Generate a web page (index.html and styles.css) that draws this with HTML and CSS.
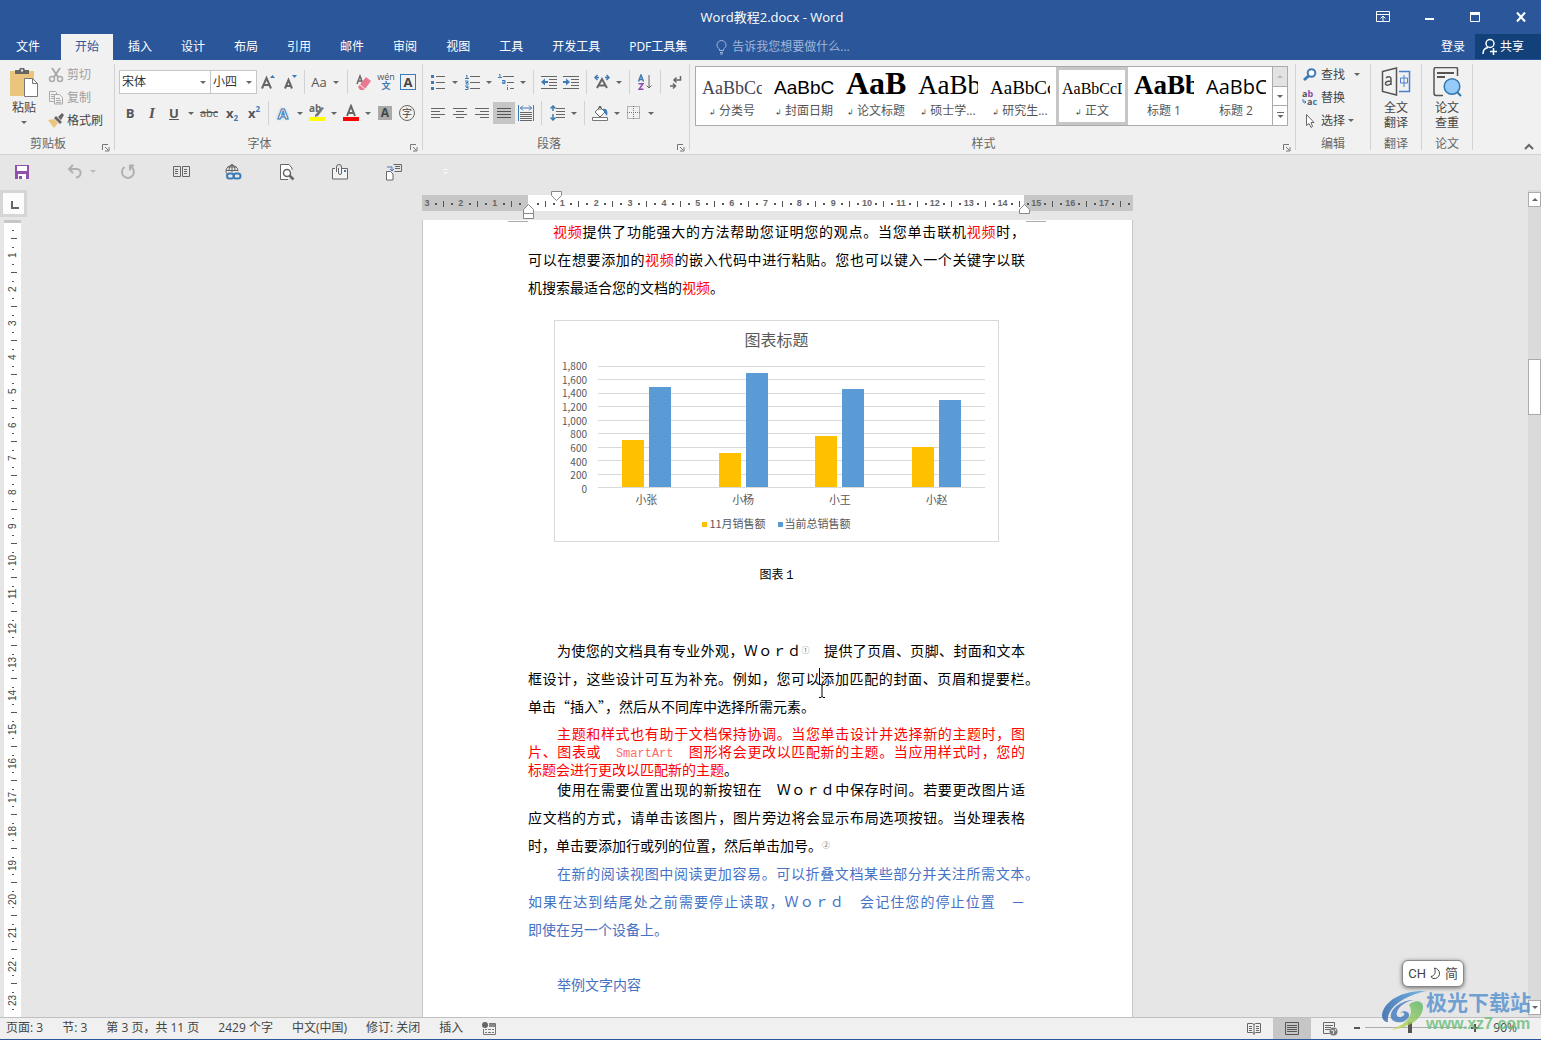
FILE: index.html
```html
<!DOCTYPE html>
<html lang="zh-CN">
<head>
<meta charset="utf-8">
<title>Word教程2.docx - Word</title>
<link rel="stylesheet" href="styles.css">
</head>
<body>
<header class="top">
  <div class="titlebar">
    <span class="doc-title">Word教程2.docx - Word</span>
    <div class="win-buttons">
      <button aria-label="功能区显示选项"><svg width="14" height="12"><path d="M.5 .5h13v10h-13zM.5 3.500h13M7 10V5.500M4.500 7.500L7 5l2.500 2.500" fill="none" stroke="#fff"/></svg></button>
      <button aria-label="最小化"><svg width="12" height="12"><path d="M2 7h9v2H2z" fill="#fff"/></svg></button>
      <button aria-label="最大化"><svg width="12" height="12"><path d="M1.500 1.500h9v9h-9z" fill="none" stroke="#fff"/><path d="M1 1h10v3H1z" fill="#fff"/></svg></button>
      <button aria-label="关闭"><svg width="12" height="12"><path d="M2 1.500l8 9M10 1.500l-8 9" stroke="#fff" stroke-width="2"/></svg></button>
    </div>
  </div>
  <nav class="tabs">
    <button class="tab file">文件</button>
    <button class="tab active">开始</button>
    <button class="tab">插入</button>
    <button class="tab">设计</button>
    <button class="tab">布局</button>
    <button class="tab">引用</button>
    <button class="tab">邮件</button>
    <button class="tab">审阅</button>
    <button class="tab">视图</button>
    <button class="tab">工具</button>
    <button class="tab">开发工具</button>
    <button class="tab">PDF工具集</button>
    <label class="tell">
      <svg width="11" height="15"><path d="M3.500 10.500v-1.500C2 8 1 6.800 1 5a4.500 4.500 0 019 0c0 1.800-1 3-2.500 4v1.500zM4 12.500h3M4 14h3" fill="none" stroke="#9fb6d8"/></svg>
      <input type="text" aria-label="告诉我" placeholder="告诉我您想要做什么...">
    </label>
    <button class="login">登录</button>
    <button class="share"><svg width="15" height="17"><circle cx="8" cy="5.500" r="4" fill="none" stroke="#fff" stroke-width="1.500"/><path d="M1 16c0-4 2-6 5-6.500M11.500 10v7M8 13.500h7" fill="none" stroke="#fff" stroke-width="1.500"/></svg>共享</button>
  </nav>
</header>

<section class="ribbon">
  <div class="group clipboard">
    <div class="body">
      <button class="big">
        <svg width="30" height="31"><path d="M1 4h24v25H1z" fill="#ecc57c"/><path d="M6 3h4l1-2h4l1 2h4v4H6z" fill="#666"/><path d="M12 2.500h2v2h-2z" fill="#f1f1f1"/><path d="M15.500 11.500h8l5 5v13h-13z" fill="#fff" stroke="#777"/><path d="M23.500 11.500v5h5" fill="none" stroke="#777"/></svg>
        <span>粘贴</span><i class="caret"></i>
      </button>
      <div class="stack">
        <button class="off"><svg width="16" height="16"><path d="M4 1l6 9M12 1L6 10" stroke="#aaa" stroke-width="2"/><circle cx="4" cy="12" r="2.500" fill="none" stroke="#aaa" stroke-width="1.500"/><circle cx="12" cy="12" r="2.500" fill="none" stroke="#aaa" stroke-width="1.500"/></svg>剪切</button>
        <button class="off"><svg width="16" height="16"><path d="M1.500 1.500h6l1 1v9h-7zM3 4.500h3M3 6.500h3M3 8.500h3" fill="none" stroke="#aaa"/><path d="M6.500 4.500h5l3 3v6.500h-8z" fill="#f1f1f1" stroke="#aaa"/><path d="M8 8.500h4M8 10.500h5M8 12.500h5" stroke="#aaa"/></svg>复制</button>
        <button><svg width="16" height="16"><path d="M0 7l6-1 4 4-4 5z" fill="#ecc57c"/><path d="M6 5l2-2 6 6-2 2zM10 4l4-4 2 2-3 5z" fill="#666"/></svg>格式刷</button>
      </div>
    </div>
    <div class="label">剪贴板<svg class="launch" width="8" height="8"><path d="M.5 6V.5H6M3 3l3 3M7 3v4H3" fill="none" stroke="#777"/></svg></div>
  </div>

  <div class="group font">
    <div class="body rows">
      <div class="row">
        <label class="combo wide"><select aria-label="字体"><option>宋体</option></select><i class="caret"></i></label>
        <label class="combo"><select aria-label="字号"><option>小四</option></select><i class="caret"></i></label>
        <button class="ic" aria-label="增大字号"><svg width="16" height="16"><path d="M2 14.500L6.500 4 11 14.500M3.500 11h6" fill="none" stroke="#666" stroke-width="2"/><path d="M10 4l2.500-3L15 4z" fill="#3e7ab5"/></svg></button>
        <button class="ic" aria-label="减小字号"><svg width="16" height="16"><path d="M3 14.500L6.500 6 10 14.500M4 12h5" fill="none" stroke="#666" stroke-width="2"/><path d="M10 1l2.500 3L15 1z" fill="#3e7ab5"/></svg></button>
        <i class="sep"></i>
        <button class="ic txt">Aa</button><i class="caret arr"></i>
        <i class="sep big-sep"></i>
        <button class="ic" aria-label="清除格式"><svg width="16" height="16"><path d="M1 10L4 2l3 8M2 7h4" fill="none" stroke="#666" stroke-width="1.500"/><path d="M4 10.500L10 3l5 4-6 8z" fill="#e8798f"/><path d="M2 13l2-2.500 5 4-1 1.500H4z" fill="#e8798f"/><path d="M3.500 10.500l5.500 4.500" stroke="#f1f1f1"/></svg></button>
        <button class="ic pinyin" aria-label="拼音指南"><span>wén</span><b>文</b></button>
        <button class="ic" aria-label="字符边框"><span class="boxed">A</span></button>
      </div>
      <div class="row">
        <button class="ic txt"><b>B</b></button>
        <button class="ic txt serif"><b><em>I</em></b></button>
        <button class="ic txt"><b><u>U</u></b></button><i class="caret arr"></i>
        <button class="ic txt small strike"><s>abc</s></button>
        <button class="ic txt"><b>x<small class="lo">2</small></b></button>
        <button class="ic txt"><b>x<small class="hi">2</small></b></button>
        <i class="sep"></i>
        <button class="ic" aria-label="文本效果"><span class="glow">A</span></button><i class="caret arr"></i>
        <button class="ic" aria-label="突出显示"><svg width="16" height="18"><text x="0" y="8" class="svg-ab">ab</text><path d="M6 11l7-8 2 1-6 8-3 1z" fill="#777"/><path d="M0 13h16v4H0z" fill="#ff0"/></svg></button><i class="caret arr"></i>
        <button class="ic" aria-label="字体颜色"><svg width="16" height="18"><path d="M4 12L8 2l4 10M5.500 9h5" fill="none" stroke="#666" stroke-width="2"/><path d="M0 13h16v4H0z" fill="#f00"/></svg></button><i class="caret arr"></i>
        <button class="ic"><span class="shaded">A</span></button>
        <button class="ic"><span class="ring">字</span></button>
      </div>
    </div>
    <div class="label">字体<svg class="launch" width="8" height="8"><path d="M.5 6V.5H6M3 3l3 3M7 3v4H3" fill="none" stroke="#777"/></svg></div>
  </div>

  <div class="group para">
    <div class="body rows">
      <div class="row">
        <button class="ic" aria-label="项目符号"><svg width="14" height="16"><path d="M0 1h3v3H0zM0 7h3v3H0zM0 13h3v3H0z" fill="#3e7ab5"/><path d="M5 2.500h9M5 8.500h9M5 14.500h9" stroke="#666"/></svg></button><i class="caret arr"></i>
        <button class="ic" aria-label="编号"><svg width="15" height="16"><path d="M1 1.500h1v3M0 4.500h4M0 7h3v1.500H1v1.500h3M0 12h3v3.500H0M1 13.500h2" fill="none" stroke="#3e7ab5"/><path d="M5 2.500h10M5 8.500h10M5 14.500h10" stroke="#666"/></svg></button><i class="caret arr"></i>
        <button class="ic" aria-label="多级列表"><svg width="17" height="16"><path d="M1 .5h1v3M0 3.500h4M4 6.500h3v3H4.500v-1.500H7M9.500 11v1M9.500 13v3" fill="none" stroke="#3e7ab5"/><path d="M5 2.500h11M9 8.500h7M12 14.500h4" stroke="#666"/></svg></button><i class="caret arr"></i>
        <i class="sep"></i>
        <button class="ic" aria-label="减少缩进"><svg width="16" height="14"><path d="M0 1.500h16M8 4.500h8M8 7.500h8M8 10.500h8M0 13.500h16" stroke="#666"/><path d="M0 7l4-3.500V6h3v2H4v2.500z" fill="#3e7ab5"/></svg></button>
        <button class="ic" aria-label="增加缩进"><svg width="16" height="14"><path d="M0 1.500h16M8 4.500h8M8 7.500h8M8 10.500h8M0 13.500h16" stroke="#666"/><path d="M7 7L3 3.500V6H0v2h3v2.500z" fill="#3e7ab5"/></svg></button>
        <i class="sep"></i>
        <button class="ic" aria-label="中文版式"><svg width="18" height="16"><path d="M4 14l5-9 5 9M6 11.500h6" fill="none" stroke="#666" stroke-width="2"/><path d="M4.500 1L2 3.500 4.500 6M2 3.500h4M13.500 1L16 3.500 13.500 6M16 3.500h-4" fill="none" stroke="#3e7ab5" stroke-width="1.500"/></svg></button><i class="caret arr"></i>
        <i class="sep"></i>
        <button class="ic" aria-label="排序"><svg width="14" height="17"><path d="M.5 7.500L3 1l2.500 6.500M1.500 5.500h3" fill="none" stroke="#3e7ab5" stroke-width="1.500"/><path d="M.5 9.800h4.500l-4 5.500h4.500" fill="none" stroke="#8e4db0" stroke-width="1.500"/><path d="M11 1v13M8.500 11.500L11 14l2.500-2.500" fill="none" stroke="#666"/></svg></button>
        <i class="sep"></i>
        <button class="ic" aria-label="显示编辑标记"><svg width="12" height="14"><path d="M10.500 1v4H4M6.500 2.500L4 5l2.500 2.500M0 11h5M3 8.500L5.500 11 3 13.500" fill="none" stroke="#666" stroke-width="1.500"/></svg></button>
      </div>
      <div class="row">
        <button class="ic" aria-label="左对齐"><svg width="14" height="12"><path d="M0 1.500h14M0 4.500h9M0 7.500h14M0 10.500h9" stroke="#666"/></svg></button>
        <button class="ic" aria-label="居中"><svg width="14" height="12"><path d="M0 1.500h14M3 4.500h8M0 7.500h14M3 10.500h8" stroke="#666"/></svg></button>
        <button class="ic" aria-label="右对齐"><svg width="14" height="12"><path d="M0 1.500h14M5 4.500h9M0 7.500h14M5 10.500h9" stroke="#666"/></svg></button>
        <button class="ic on" aria-label="两端对齐"><svg width="14" height="12"><path d="M0 1.500h14M0 4.500h14M0 7.500h14M0 10.500h14" stroke="#555"/></svg></button>
        <button class="ic" aria-label="分散对齐"><svg width="16" height="16"><path d="M.5 0v16M15.500 0v16M2 3h12M5 .5L2.500 3 5 5.500M11 .5L13.500 3 11 5.500" fill="none" stroke="#3e7ab5"/><path d="M2 7.500h12M2 9.500h12M2 11.500h12M2 13.500h12M2 15.500h12" stroke="#666"/></svg></button>
        <i class="sep big-sep"></i>
        <button class="ic" aria-label="行距"><svg width="15" height="16"><path d="M6 3.500h9M6 6.500h9M6 9.500h9M6 12.500h9" stroke="#666"/><path d="M3 1v5M.5 3.500L3 1l2.500 2.500M3 9v6M.5 12.500L3 15l2.500-2.500" fill="none" stroke="#3e7ab5" stroke-width="1.500"/></svg></button><i class="caret arr"></i>
        <i class="sep"></i>
        <button class="ic" aria-label="底纹"><svg width="17" height="16"><path d="M3 7l5-5 5 5-5 5z" fill="#fff" stroke="#666"/><path d="M7 5V1.500h2V5" fill="none" stroke="#666"/><path d="M11 4c4-1 5 3 4 7l-3-4z" fill="#3e7ab5"/><path d="M.5 12.500h15v3H.5z" fill="#fff" stroke="#777"/></svg></button><i class="caret arr"></i>
        <button class="ic" aria-label="边框"><svg width="14" height="14"><path d="M.5 .5h12v12H.5zM6.500 0v13M0 6.500h13" fill="none" stroke="#777" stroke-dasharray="1 1"/></svg></button><i class="caret arr"></i>
      </div>
    </div>
    <div class="label">段落<svg class="launch" width="8" height="8"><path d="M.5 6V.5H6M3 3l3 3M7 3v4H3" fill="none" stroke="#777"/></svg></div>
  </div>

  <div class="group styles">
    <div class="gallery">
      <button class="style"><span class="pv s1">AaBbCc</span><span class="nm"><i>↲</i> 分类号</span></button>
      <button class="style"><span class="pv s2">AaBbCc</span><span class="nm"><i>↲</i> 封面日期</span></button>
      <button class="style"><span class="pv s3">AaB</span><span class="nm"><i>↲</i> 论文标题</span></button>
      <button class="style"><span class="pv s4">AaBb</span><span class="nm"><i>↲</i> 硕士学...</span></button>
      <button class="style"><span class="pv s5">AaBbCc</span><span class="nm"><i>↲</i> 研究生...</span></button>
      <button class="style picked"><span class="pv s6">AaBbCcD</span><span class="nm"><i>↲</i> 正文</span></button>
      <button class="style"><span class="pv s7">AaBb</span><span class="nm">标题 1</span></button>
      <button class="style"><span class="pv s8">AaBbC</span><span class="nm">标题 2</span></button>
      <div class="gscroll">
        <button class="dim" aria-label="上一行"><i class="caret up"></i></button>
        <button aria-label="下一行"><i class="caret"></i></button>
        <button aria-label="其他"><svg width="7" height="7"><path d="M0 .5h7" stroke="#666"/><path d="M.5 3h6l-3 3z" fill="#666"/></svg></button>
      </div>
    </div>
    <div class="label">样式<svg class="launch" width="8" height="8"><path d="M.5 6V.5H6M3 3l3 3M7 3v4H3" fill="none" stroke="#777"/></svg></div>
  </div>

  <div class="group edit">
    <div class="body">
      <div class="stack">
        <button><svg width="16" height="16"><circle cx="9.500" cy="6" r="3.800" fill="#fff" stroke="#3e7ab5" stroke-width="2"/><path d="M6.500 9L2 13" stroke="#3e7ab5" stroke-width="3"/></svg>查找<i class="caret far"></i></button>
        <button><svg width="16" height="16"><text x="0" y="7" class="svg-rep">a<tspan fill="#8e4db0">b</tspan></text><text x="5" y="15" class="svg-rep">a<tspan fill="#3e7ab5">c</tspan></text><path d="M1 9v3h3M2.500 10.500L4 12l-1.500 1.500" fill="none" stroke="#3e7ab5"/></svg>替换</button>
        <button><svg width="16" height="16"><path d="M4.500 1.500v11l2.500-2 2 4 1.500-1-1.500-4h3z" fill="#fff" stroke="#666"/></svg>选择<i class="caret"></i></button>
      </div>
    </div>
    <div class="label">编辑</div>
  </div>
  <div class="group narrow">
    <div class="body">
      <button class="big"><svg width="30" height="31"><path d="M1.500 4.500l14-3.500v27l-14-3.500z" fill="none" stroke="#555" stroke-width="1.500"/><path d="M5 11c2-2 5-1.500 5 1v6M10 14c-3 0-5.500 0-5.500 2.500S9 18.500 10 16" fill="none" stroke="#555" stroke-width="1.500"/><path d="M18 4.500h10.500v20H18" fill="none" stroke="#4a80d0" stroke-width="1.500"/><path d="M19.500 11h7v5h-7zM23 8v12" fill="none" stroke="#4a80d0"/></svg><span>全文</span><span>翻译</span></button>
    </div>
    <div class="label">翻译</div>
  </div>
  <div class="group narrow">
    <div class="body">
      <button class="big"><svg width="30" height="31"><path d="M25.500 9V2c0-1-.5-1.500-1.500-1.500H4C3 .5 2 1 2 2.500V26c0 1.500.5 2.500 2 2.500h7" fill="none" stroke="#555" stroke-width="1.500"/><path d="M5 6h17M5 10h8" stroke="#555" stroke-width="2"/><circle cx="20" cy="19.500" r="7.800" fill="#96caf8" stroke="#2f78ad" stroke-width="1.500"/><path d="M25 25l4 4" stroke="#2f78ad" stroke-width="2"/></svg><span>论文</span><span>查重</span></button>
    </div>
    <div class="label">论文</div>
  </div>
  <button class="collapse" aria-label="折叠功能区"><svg width="10" height="7"><path d="M1 6l4-4 4 4" fill="none" stroke="#666" stroke-width="2"/></svg></button>
</section>

<div class="qat">
  <button aria-label="保存"><svg width="16" height="16"><path d="M1 1h14v14H1z" fill="#8e52ad"/><path d="M3 2h10v5H3zM4 10h8v5H4z" fill="#fff"/><path d="M5 12h3v3H5z" fill="#8e52ad"/></svg></button>
  <button aria-label="撤消"><svg width="16" height="16"><path d="M6 1L2 5l4 4M2.500 5H10c5 0 5 8-1 8.500" fill="none" stroke="#b0b0b0" stroke-width="2"/></svg><i class="caret pale"></i></button>
  <button aria-label="重复"><svg width="16" height="16"><path d="M10.500 2.500a6 6 0 11-6 .5M14 1.500h-4v5" fill="none" stroke="#b0b0b0" stroke-width="2"/></svg></button>
  <button aria-label="双页"><svg width="17" height="12"><path d="M.5 .5h7v10h-7zM9.500 .5h7v10h-7zM2 3.500h3M2 5.500h3M2 7.500h3M11 3.500h3M11 5.500h3M11 7.500h3" fill="none" stroke="#666"/></svg></button>
  <button aria-label="超链接"><svg width="18" height="18"><path d="M1 8a6 5.500 0 0112 0M1 7.500h12M7 1v8M4 8c0-3 1-6 3-6.500M10 8c0-3-1-6-3-6.500M1 8c0 2 1 3 2 4M2.500 4h9" fill="none" stroke="#666"/><rect x="2" y="10.500" width="7" height="5" rx="2.500" fill="none" stroke="#3e7ab5" stroke-width="2"/><rect x="8.500" y="10.500" width="7" height="5" rx="2.500" fill="none" stroke="#3e7ab5" stroke-width="2"/></svg></button>
  <button aria-label="打印预览"><svg width="16" height="17"><path d="M13 6V4l-3-3.500H1.500v15H9" fill="#fff" stroke="#666"/><circle cx="8" cy="9" r="3.500" fill="#fff" stroke="#666" stroke-width="1.500"/><path d="M10.500 11.500l4 4" stroke="#666" stroke-width="2.500"/></svg></button>
  <button aria-label="附件"><svg width="17" height="16"><path d="M3 4.500H.5v10.500h15V4.500H10" fill="#f4f4f4" stroke="#666"/><path d="M4.500 8V3a2 2 0 015 0v6a1.500 1.500 0 01-3 0V4" fill="none" stroke="#666"/><path d="M12 6h2v2h-2z" fill="#3e7ab5"/></svg></button>
  <button aria-label="切换窗口"><svg width="17" height="17"><path d="M8.500 .5h8v7h-7M10 2.500h5M10 4.500h5" fill="none" stroke="#666"/><path d="M1.500 7.500h4l2.500 2.500v6h-6.500z" fill="#fff" stroke="#666"/><path d="M2 3h5v4M5 5l2 2 2-2" fill="none" stroke="#3e7ab5"/></svg></button>
  <button aria-label="自定义"><svg width="6" height="6"><path d="M0 .5h5" stroke="#f8f8f8"/><path d="M0 3h5L2.500 5.500z" fill="#f8f8f8"/></svg></button>
</div>

<main class="workspace">
  <div class="left">
    <div class="ruler-row">
      <div class="corner"><svg width="21" height="20"><path d="M9 8v7h7" fill="none" stroke="#666" stroke-width="2"/></svg></div>
      <div class="hwrap">
        <div class="hruler">
          <span>3</span><span>2</span><span>1</span><span></span><span>1</span><span>2</span><span>3</span><span>4</span><span>5</span><span>6</span><span>7</span><span>8</span><span>9</span><span>10</span><span>11</span><span>12</span><span>13</span><span>14</span><span>15</span><span>16</span><span>17</span>
          <svg class="mark first" width="12" height="11"><path d="M.5 .5h10v4l-5 5-5-5z" fill="#fff" stroke="#888"/></svg>
          <svg class="mark lefti" width="12" height="16"><path d="M.5 9.500V5.500l5-5 5 5v4zM.5 9.500h10v5H.5z" fill="#fff" stroke="#888"/></svg>
          <svg class="mark righti" width="12" height="11"><path d="M.5 9.500V5.500l5-5 5 5v4z" fill="#fff" stroke="#888"/></svg>
        </div>
      </div>
    </div>
    <div class="doc-row">
      <div class="vcol"><ol class="vruler">
        <li>1</li><li>2</li><li>3</li><li>4</li><li>5</li><li>6</li><li>7</li><li>8</li><li>9</li><li>10</li><li>11</li><li>12</li><li>13</li><li>14</li><li>15</li><li>16</li><li>17</li><li>18</li><li>19</li><li>20</li><li>21</li><li>22</li><li>23</li><li>24</li>
      </ol></div>
      <div class="canvas">
        <article class="page">
          <p class="lead"><span class="ln"><em>视频</em>提供了功能强大的方法帮助您证明您的观点。当您单击联机<em>视频</em>时，</span><span class="ln">可以在想要添加的<em>视频</em>的嵌入代码中进行粘贴。您也可以键入一个关键字以联</span><span class="ln end">机搜索最适合您的文档的<em>视频</em>。</span></p>
          <figure>
            <div class="chart">
              <h2>图表标题</h2>
              <div class="plot-row">
                <div class="axis"><span>1,800</span><span>1,600</span><span>1,400</span><span>1,200</span><span>1,000</span><span>800</span><span>600</span><span>400</span><span>200</span><span>0</span></div>
                <div class="plot">
                  <div class="grid"><i></i><i></i><i></i><i></i><i></i><i></i><i></i><i></i><i></i></div>
                  <div class="bars">
                    <div><i style="height:39%"></i><i style="height:83%"></i></div>
                    <div><i style="height:28%"></i><i style="height:94%"></i></div>
                    <div><i style="height:42%"></i><i style="height:81%"></i></div>
                    <div><i style="height:33%"></i><i style="height:72%"></i></div>
                  </div>
                </div>
              </div>
              <div class="cats"><span>小张</span><span>小杨</span><span>小王</span><span>小赵</span></div>
              <div class="legend"><span>11月销售额</span><span>当前总销售额</span></div>
            </div>
            <figcaption>图表 <span>1</span></figcaption>
          </figure>
          <p><span class="ln">为使您的文档具有专业外观，Ｗｏｒｄ<sup>①</sup>　提供了页眉、页脚、封面和文本</span><span class="ln hang">框设计，这些设计可互为补充。例如，您可以<span class="cursor"><svg width="9" height="32"><path d="M1.500 0v16" stroke="#000"/><path d="M1 16.500h2l1 1 1-1h2M4 17v12M1 29.500h2l1-1 1 1h2" fill="none" stroke="#000"/></svg></span>添加匹配的封面、页眉和提要栏。</span><span class="ln end">单击“插入”，然后从不同库中选择所需元素。</span></p>
          <p class="tight"><span class="ln">主题和样式也有助于文档保持协调。当您单击设计并选择新的主题时，图</span><span class="ln">片、图表或　<span class="mono">SmartArt</span>　图形将会更改以匹配新的主题。当应用样式时，您的</span><span class="ln end">标题会进行更改以匹配新的主题<b>。</b></span></p>
          <p><span class="ln">使用在需要位置出现的新按钮在　Ｗｏｒｄ中保存时间。若要更改图片适</span><span class="ln">应文档的方式，请单击该图片，图片旁边将会显示布局选项按钮。当处理表格</span><span class="ln end">时，单击要添加行或列的位置，然后单击加号。<sup>②</sup></span></p>
          <p class="blue"><span class="ln hang">在新的阅读视图中阅读更加容易。可以折叠文档某些部分并关注所需文本。</span><span class="ln">如果在达到结尾处之前需要停止读取，Ｗｏｒｄ　会记住您的停止位置　－</span><span class="ln end">即使在另一个设备上。</span></p>
          <p class="blue last"><span class="ln end">举例文字内容</span></p>
        </article>
      </div>
    </div>
  </div>
  <div class="scrollbar">
    <button aria-label="向上滚动"><i class="caret up"></i></button>
    <div class="track"><div class="thumb"></div></div>
    <button aria-label="向下滚动"><i class="caret"></i></button>
  </div>
</main>

<footer class="status">
  <span>页面: 3</span><span>节: 3</span><span>第 3 页，共 11 页</span><span>2429 个字</span><span>中文(中国)</span><span>修订: 关闭</span><span>插入</span>
  <svg width="14" height="14"><circle cx="3" cy="4" r="3" fill="#666"/><path d="M7 2.500h6.500v11h-12V8M3 8.500h9M3 11.500h9" fill="none" stroke="#777"/><path d="M7 3h6v3H7z" fill="#888"/><path d="M5.500 7v6M9.500 7v6" stroke="#f0f0f0"/></svg>
  <div class="views">
    <button aria-label="阅读视图"><svg width="14" height="13"><path d="M.5 1.500h5l1.500 1 1.500-1h5v9h-5l-1.500 1-1.500-1h-5zM7 2v11M2 4.500h3M2 6.500h3M2 8.500h3M9 4.500h3M9 6.500h3M9 8.500h3" fill="none" stroke="#666"/></svg></button>
    <button class="on" aria-label="页面视图"><svg width="14" height="13"><path d="M.5 .5h13v12H.5zM2 3.500h10M2 5.500h10M2 7.500h10M2 9.500h10" fill="none" stroke="#555"/></svg></button>
    <button aria-label="Web 版式"><svg width="15" height="14"><path d="M11.500 5V.5H.5v11h6M2 3.500h8M2 5.500h6M2 7.500h5" fill="none" stroke="#666"/><circle cx="10.500" cy="9.500" r="4" fill="#777"/><path d="M8 8l3 1-1 3M12 7l1 2" stroke="#f0f0f0" fill="none"/></svg></button>
  </div>
  <button class="zoomb" aria-label="缩小"><svg width="8" height="8"><path d="M1 4h6" stroke="#555" stroke-width="2"/></svg></button>
  <input class="zoom" type="range" min="0" max="100" value="44" aria-label="显示比例">
  <button class="zoomb" aria-label="放大"><svg width="8" height="8"><path d="M0 4h8M4 0v8" stroke="#555" stroke-width="2"/></svg></button>
  <span class="pct">90%</span>
</footer>

<div class="ime">CH <svg width="11" height="13"><path d="M4.500 1c6 1 7 8.500 1 10.500C3.500 12 1.500 11 1 9.500 5 9 6 5 4.500 1z" fill="none" stroke="#444"/></svg> 简</div>
<div class="stamp">
  <svg width="66" height="42" viewBox="0 0 66 42">
    <defs><linearGradient id="swirl" x1="0" y1="0" x2="1" y2="0"><stop offset="0" stop-color="#3568b0"/><stop offset="1" stop-color="#5fb4e6"/></linearGradient><linearGradient id="leaf" x1="0" y1="1" x2="1" y2="0"><stop offset="0" stop-color="#d8dc5a"/><stop offset="1" stop-color="#5eb872"/></linearGradient></defs>
    <path d="M44 1C22 0 2 10 0 25c0 5 3 7 6 7C4 20 18 7 44 1z" fill="url(#swirl)"/>
    <path d="M32 10C20 10 7 19 9 28c3 7 16 5 18-2 1-5-6-6-9-3 3-1 5 0 4 2-3 4-9 2-7-3 2-6 9-11 17-12z" fill="#4a7fc2"/>
    <path d="M27 15c5-5 13-5 14 1 1 11-12 22-33 24 13-4 26-14 19-25z" fill="url(#leaf)"/>
  </svg>
  <div><b>极光下载站</b><strong>www.xz7.com</strong></div>
</div>
</body>
</html>
```
FILE: styles.css
```css
* { box-sizing: border-box; }
html, body { height: 100%; margin: 0; }
body {
  display: flex;
  flex-direction: column;
  overflow: hidden;
  position: relative;
  background: #e6e6e6;
  color: #444;
  font: 12px/16px "Open Sans", "Noto Sans CJK SC", sans-serif;
}
button {
  border: 0;
  padding: 0;
  background: none;
  color: inherit;
  font: inherit;
  white-space: nowrap;
}
svg { display: block; flex: none; }
i { font-style: normal; }

.caret {
  flex: none;
  width: 0;
  height: 0;
  border: 3px solid transparent;
  border-top-color: #666;
  border-bottom: 0;
}
.caret.up { border-top: 0; border-bottom: 3px solid #666; }
.caret.arr { margin: 0 3px; }
.caret.pale { border-top-color: #bbb; }

/* title bar and tabs */
.top { background: #2b579a; color: #fff; }
.titlebar { display: flex; height: 34px; align-items: center; padding-left: 184px; }
.doc-title { flex: 1; text-align: center; font-size: 13px; }
.win-buttons { display: flex; margin-right: -3px; }
.win-buttons button { width: 46px; height: 32px; display: flex; align-items: center; justify-content: center; }
.tabs { display: flex; height: 26px; gap: 1px; }
.tab { padding: 0 14px; line-height: 24px; height: 26px; }
.tab.file { padding: 0 16px; margin-right: 4px; }
.tab.active { background: #f1f1f1; color: #2b579a; }
.tell { display: flex; flex: 1; align-items: center; padding-left: 14px; gap: 5px; }
.tell input { border: 0; padding: 0; background: none; font: inherit; width: 160px; }
.tell input::placeholder { color: #9fb6d8; }
.login { padding: 0 9px; line-height: 22px; }
.share { display: flex; gap: 3px; width: 66px; height: 25px; padding-left: 7px; align-items: center; background: #124078; line-height: 22px; }

/* ribbon */
.ribbon { display: flex; height: 95px; flex: none; background: #f1f1f1; border-bottom: 1px solid #d2d2d2; padding-top: 4px; }
.group { display: flex; flex-direction: column; height: 86px; flex: none; border-right: 1px solid #d2d2d2; }
.body { display: flex; height: 72px; flex: none; }
.label { position: relative; text-align: center; line-height: 16px; color: #666; }
.launch { position: absolute; right: 4px; bottom: 0; }
.clipboard { width: 115px; }
.clipboard .label { padding-right: 18px; }
.font { width: 308px; padding-left: 4px; }
.font .label { padding-right: 22px; }
.para { width: 267px; padding-left: 4px; }
.para .label { padding-right: 18px; }
.styles { flex: 1; padding: 2px 7px 0 5px; min-width: 0; }
.styles .label { padding-right: 16px; margin-top: 10px; }
.styles .launch { right: -3px; }
.edit { width: 75px; padding-left: 6px; }
.edit .label { padding-right: 6px; }
.narrow { width: 51px; }

.big { display: flex; flex-direction: column; align-items: center; width: 48px; padding-top: 3px; line-height: 15px; }
.narrow .big { width: 50px; }
.big svg { margin-bottom: 2px; }
.big .caret { margin-top: 6px; }
.stack { display: flex; flex-direction: column; margin-top: -1px; }
.stack button { display: flex; align-items: center; height: 23px; gap: 3px; }
.stack .off { color: #a0a0a0; }
.edit .stack .far { margin-left: 6px; }

.rows { flex-direction: column; }
.row { display: flex; align-items: center; height: 28px; }
.row:first-child { height: 34px; margin-top: 1px; }
.ic { display: flex; align-items: center; justify-content: center; width: 22px; height: 22px; flex: none; }
.ic.on { background: #c6c6c6; }
.ic.txt { font-size: 13px; color: #555; }
.ic.small { font-size: 11px; }
.ic.strike { width: 24px; }
.ic.serif { font-family: "Liberation Serif", serif; font-size: 15px; }
.ic small { font-size: 8px; line-height: 1px; color: #3e7ab5; }
.ic .lo { vertical-align: -3px; }
.ic .hi { vertical-align: 6px; }
.sep { width: 1px; height: 24px; margin: 0 3px; background: #d2d2d2; flex: none; }
.big-sep { margin: 0 5px; }
.para .sep { margin: 0 4px; }
.combo { position: relative; width: 47px; height: 24px; margin-left: -1px; }
.combo.wide { width: 92px; margin-left: 0; }
.combo select { width: 100%; height: 100%; padding: 0 2px; border: 1px solid #c6c6c6; border-radius: 0; background: #fff; appearance: none; color: #333; font: inherit; }
.combo .caret { position: absolute; right: 5px; top: 11px; }
.pinyin { flex-direction: column; color: #555; font-size: 9px; line-height: 8px; }
.pinyin b { color: #3e7ab5; font-size: 9px; line-height: 10px; }
.boxed { width: 16px; height: 16px; border: 1px solid #3e7ab5; color: #444; font-size: 13px; font-weight: bold; line-height: 14px; }
.glow { color: #fff; font-size: 15px; font-weight: bold; -webkit-text-stroke: 1px #3e7ab5; text-shadow: 0 0 3px #7fb0e0; }
.shaded { width: 14px; height: 14px; background: #aaa; font-weight: bold; line-height: 14px; }
.ring { width: 16px; height: 16px; border: 1px solid #666; border-radius: 50%; font-size: 10px; line-height: 14px; }
.svg-ab { font: bold 10px "Open Sans", sans-serif; fill: #666; }
.svg-rep { font: bold 9px "Open Sans", sans-serif; fill: #555; }

.gallery { display: flex; height: 60px; border: 1px solid #ababab; background: #fff; flex: none; }
.style { flex: 1 1 0; min-width: 0; padding: 0 6px; display: flex; flex-direction: column; align-items: center; }
.style.picked { padding: 0 3px; border: 3px solid #c6c6c6; }
.style.picked .pv::before { height: 24px; }
.style.picked .pv { height: 32px; }
.pv { display: flex; align-items: baseline; width: 100%; height: 35px; overflow: hidden; color: #000; line-height: 20px; font-family: "Liberation Serif", serif; }
.pv::before { content: ""; height: 27px; }
.s1 { font-size: 18px; color: #445; }
.s2 { font-family: "Liberation Sans", sans-serif; font-size: 19px; }
.s3 { font-size: 32px; font-weight: bold; }
.s4 { font-size: 27px; }
.s5 { font-size: 19px; }
.s6 { font-size: 16px; }
.s7 { font-size: 27px; font-weight: bold; }
.s8 { font-family: "Open Sans", sans-serif; font-size: 20px; }
.nm { color: #555; line-height: 17px; }
.nm i { font: 8px "DejaVu Sans", sans-serif; }
.gscroll { display: flex; flex-direction: column; width: 15px; flex: none; border-left: 1px solid #ababab; }
.gscroll button { flex: 1; display: flex; align-items: center; justify-content: center; border-bottom: 1px solid #ababab; }
.gscroll button:last-child { border-bottom: 0; }
.gscroll .dim { background: #e3e3e3; }
.dim .caret.up { border-bottom-color: #bbb; }
.collapse { display: flex; width: 68px; justify-content: flex-end; align-items: flex-end; padding: 0 7px 4px 0; }

/* quick access bar */
.qat { display: flex; height: 35px; flex: none; align-items: center; padding: 0 0 1px 6px; }
.qat button { position: relative; display: flex; justify-content: center; width: 32px; margin-right: 21px; }
.qat .caret { position: absolute; right: -5px; top: 6px; }

/* workspace */
.workspace { display: flex; flex: 1; min-height: 0; }
.left { display: flex; flex-direction: column; flex: 1; min-width: 0; }
.ruler-row { display: flex; height: 30px; flex: none; }
.corner { width: 27px; height: 27px; border: 3px solid #d6d6d6; background: #fcfcfc; flex: none; }
.hwrap { display: flex; flex: 1; justify-content: center; }
.hruler { position: relative; display: grid; grid-template-columns: repeat(21, 1fr); width: 711px; height: 16px; margin-top: 5px; background: linear-gradient(90deg, #c6c6c6 106px, #fff 106px 602px, #c6c6c6 602px); font: bold 9px/17px "Liberation Sans", sans-serif; color: #666; }
.hruler span {
  display: flex;
  justify-content: center;
  min-width: 0;
  padding-right: 24px;
  background:
    linear-gradient(#555, #555) 13px 8px / 2px 2px no-repeat,
    linear-gradient(#555, #555) 21px 6px / 1px 6px no-repeat,
    linear-gradient(#555, #555) 29px 8px / 2px 2px no-repeat;
}
.mark { position: absolute; }
.first { left: 129px; top: -4px; }
.lefti { left: 101px; top: 9px; }
.righti { left: 597px; top: 9px; }
.doc-row { display: flex; flex: 1; min-height: 0; }
.vcol { width: 27px; padding-left: 4px; overflow: hidden; flex: none; }
.vruler { list-style: none; margin: 0; padding: 3px 0 0; width: 17px; border-top: 3px solid #c6c6c6; background: #fff; font: 10px/17px "Liberation Sans", sans-serif; color: #444; }
.vruler li {
  display: flex;
  justify-content: center;
  writing-mode: vertical-rl;
  transform: rotate(180deg);
  width: 17px;
  height: 34px;
  padding-bottom: 24px;
  background:
    linear-gradient(#555, #555) 7px 12px / 2px 1px no-repeat,
    linear-gradient(#555, #555) 4px 21px / 6px 1px no-repeat,
    linear-gradient(#555, #555) 7px 29px / 2px 1px no-repeat;
}
.vruler li:nth-child(7n) { height: 33px; }
.canvas { display: flex; flex: 1; justify-content: center; overflow: hidden; }
.page {
  width: 711px;
  padding: 0 107px 0 105px;
  border: solid #c6c6c6;
  border-width: 0 1px;
  background:
    linear-gradient(#ababab, #ababab) 85px 1px / 20px 1px no-repeat,
    linear-gradient(#ababab, #ababab) 603px 1px / 20px 1px no-repeat,
    #fff;
  color: #000;
  font: 14px/28px "Noto Sans CJK SC", sans-serif;
}
.page p { margin: 0; text-indent: 29px; }
.page .lead { margin-top: -3px; text-indent: 25px; }
.page em { font-style: normal; color: #f00; }
.page sup { font-size: 8px; line-height: 1px; vertical-align: 3px; color: #777; }
.ln { display: block; text-align-last: justify; white-space: nowrap; }
.ln + .ln { text-indent: 0; }
.ln.end { text-align-last: left; }
.ln.hang { margin-right: -14px; }
.page .tight { margin: 4px 0 -3px; line-height: 18px; color: #f00; }
.tight b { color: #000; font-weight: 400; }
.mono { font: 12px/12px "Liberation Mono", monospace; opacity: 0.6; }
.page .blue { color: #4472c4; }
.page .last { margin-top: 27px; }
.cursor { position: relative; text-indent: 0; }
.cursor svg { position: absolute; left: -2px; top: 0; }

figure { margin: 19px 0 46px; }
.chart { height: 222px; margin: 0 26px; border: 1px solid #d9d9d9; color: #595959; font-size: 11px; line-height: 16px; }
.chart h2 { margin: 6px 0 15px; font-size: 16px; line-height: 24px; font-weight: 400; text-align: center; }
.plot-row { display: flex; height: 122px; padding-right: 13px; }
.axis { display: flex; flex-direction: column; justify-content: space-between; width: 43px; padding-right: 11px; margin: -7px 0; line-height: 13px; font-size: 10px; text-align: right; }
.plot { display: grid; flex: 1; }
.grid, .bars { grid-area: 1 / 1; display: grid; }
.grid { grid-template-rows: repeat(9, 1fr); border-bottom: 1px solid #d9d9d9; }
.grid i { border-top: 1px solid #d9d9d9; }
.bars { grid-template-columns: repeat(4, 1fr); padding-bottom: 1px; }
.bars div { display: flex; justify-content: center; align-items: flex-end; gap: 5px; }
.bars i { width: 22px; background: #ffc000; }
.bars i + i { background: #5b9bd5; }
.cats { display: grid; grid-template-columns: repeat(4, 1fr); padding: 3px 13px 0 43px; text-align: center; }
.legend { display: flex; justify-content: center; gap: 12px; margin-top: 8px; }
.legend span::before { content: ""; display: inline-block; width: 5px; height: 5px; margin: 0 2px 1px 0; background: #ffc000; }
.legend span + span::before { background: #5b9bd5; }
figcaption { margin-top: 18px; text-align: center; font-size: 12px; }
figcaption span { font-family: "Liberation Mono", monospace; }

.scrollbar { display: flex; flex-direction: column; width: 13px; padding: 2px 0; background: #dadada; }
.scrollbar button { display: flex; align-items: center; justify-content: center; height: 15px; border: 1px solid #ababab; background: #fff; flex: none; }
.track { display: flex; flex-direction: column; flex: 1; }
.track::before { content: ""; flex: 152 1 0; }
.track::after { content: ""; flex: 587 1 0; }
.thumb { height: 56px; border: 1px solid #ababab; background: #fff; }

/* status bar */
.status { display: flex; align-items: center; height: 23px; flex: none; padding: 0 24px 2px 6px; gap: 19px; border-top: 1px solid #c0c0c0; border-bottom: 1px solid #2b579a; background: #f0f0f0; }
.views { display: flex; margin-left: auto; }
.views button { display: flex; align-items: center; justify-content: center; width: 38px; height: 21px; margin-bottom: -2px; }
.views .on { background: #c6c6c6; }
.zoomb { margin: 0 -15px; }
.zoom { appearance: none; width: 102px; height: 12px; margin: 0; background: linear-gradient(#aaa, #aaa) center / 100% 1px no-repeat; }
.zoom::-webkit-slider-thumb { appearance: none; width: 4px; height: 11px; background: #555; }
.pct { margin-left: 10px; }

.ime { position: absolute; right: 77px; bottom: 53px; display: flex; align-items: center; gap: 4px; height: 27px; padding: 0 5px; border: 1px solid #888; border-radius: 6px; background: #fff; box-shadow: 0 1px 4px #0008; font: 13px/20px "Roboto", "Noto Sans CJK SC", sans-serif; }
.stamp { position: absolute; right: 10px; bottom: 6px; display: flex; opacity: 0.85; pointer-events: none; }
.stamp svg { margin-right: -22px; }
.stamp div { display: flex; flex-direction: column; }
.stamp b { color: #5b94cf; font-size: 21px; line-height: 24px; }
.stamp strong { color: #6fbf80; font: bold 16px/20px "Liberation Sans", sans-serif; }
```
